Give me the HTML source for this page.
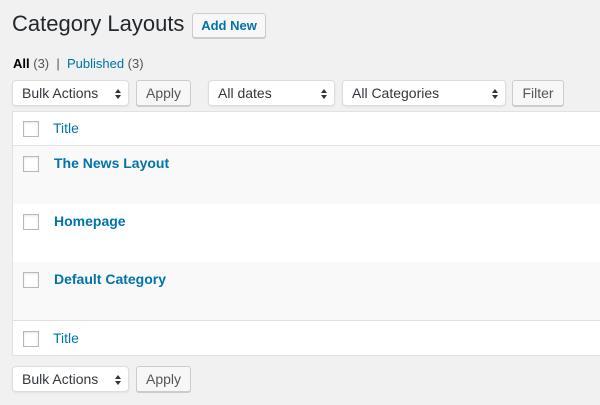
<!DOCTYPE html>
<html><head><meta charset="utf-8"><style>
*{box-sizing:border-box;margin:0;padding:0}
body{width:600px;height:405px;overflow:hidden;background:#f1f1f1;font-family:"Liberation Sans",Arial,sans-serif;color:#444;position:relative}
.a{position:absolute}
h1{position:absolute;left:12px;top:11px;font-size:22px;font-weight:400;color:#23282d}
.btn{position:absolute;border:1px solid #ccc;background:#f7f7f7;border-radius:3px;box-shadow:0 1px 0 #ccc;font-size:14px;color:#555;text-align:center}
.sel{position:absolute;border:1px solid #ddd;background:#fff;border-radius:4px;font-size:14px;color:#32373c;padding-left:9px;box-shadow:0 1px 2px rgba(0,0,0,.07)}
.sel:after{content:"";position:absolute;right:7px;top:8px;border:3.5px solid transparent;border-bottom:4px solid #333;border-top:0}
.sel:before{content:"";position:absolute;right:7px;top:14px;border:3.5px solid transparent;border-top:4px solid #333;border-bottom:0}
.cb{position:absolute;left:23px;width:16px;height:16px;border:1px solid #b4b9be;background:#fff;box-shadow:inset 0 1px 2px rgba(0,0,0,.1)}
.t{position:absolute;left:54px;font-size:14px;font-weight:700;color:#0073aa}
.h{position:absolute;left:53px;font-size:14px;color:#0073aa}
</style></head><body>
<h1>Category Layouts</h1>
<div class="btn" style="left:192px;top:13px;width:74px;height:25px;line-height:23px;color:#0073aa;font-weight:700;font-size:13px">Add New</div>
<div class="a" style="left:13px;top:56px;font-size:13px;color:#555"><b style="color:#000">All</b> (3) &nbsp;|&nbsp; <span style="color:#0073aa">Published</span> (3)</div>

<div class="sel" style="left:12px;top:80px;width:117px;height:26px;line-height:24px">Bulk Actions</div>
<div class="btn" style="left:136px;top:80px;width:55px;height:26px;line-height:25px">Apply</div>
<div class="sel" style="left:208px;top:80px;width:127px;height:26px;line-height:24px">All dates</div>
<div class="sel" style="left:342px;top:80px;width:164px;height:26px;line-height:24px">All Categories</div>
<div class="btn" style="left:512px;top:80px;width:52px;height:26px;line-height:25px">Filter</div>

<div class="a" style="left:12px;top:111px;width:600px;height:245px;background:#fff;border:1px solid #e1e1e1"></div>
<div class="a" style="left:13px;top:145px;width:600px;height:1px;background:#e1e1e1"></div>
<div class="a" style="left:13px;top:146px;width:600px;height:58px;background:#f9f9f9"></div>
<div class="a" style="left:13px;top:262px;width:600px;height:58px;background:#f9f9f9"></div>
<div class="a" style="left:13px;top:320px;width:600px;height:1px;background:#e1e1e1"></div>

<div class="cb" style="top:121px"></div><div class="h" style="top:120px">Title</div>
<div class="cb" style="top:156px"></div><div class="t" style="top:155px">The News Layout</div>
<div class="cb" style="top:214px"></div><div class="t" style="top:213px">Homepage</div>
<div class="cb" style="top:272px"></div><div class="t" style="top:271px">Default Category</div>
<div class="cb" style="top:331px"></div><div class="h" style="top:330px">Title</div>

<div class="sel" style="left:12px;top:366px;width:117px;height:26px;line-height:24px">Bulk Actions</div>
<div class="btn" style="left:136px;top:366px;width:55px;height:26px;line-height:25px">Apply</div>
</body></html>
